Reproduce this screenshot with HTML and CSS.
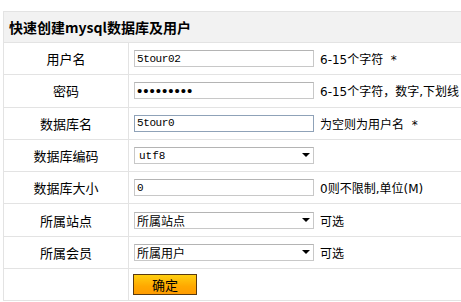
FILE: index.html
```html
<!DOCTYPE html>
<html lang="zh-CN">
  <head>
    <meta charset="UTF-8" />
    <title>快速创建mysql数据库及用户</title>
    <link rel="stylesheet" href="styles.css">
  </head>
  <body>
    <div class="wrap">
      <table class="form-table">
        <tr class="head">
          <th colspan="2">快速创建mysql数据库及用户</th>
        </tr>
        <tr>
          <td class="label">用户名</td>
          <td><input class="txt" type="text" value="5tour02" /><span class="hint">6-15个字符&nbsp;&nbsp;*</span></td>
        </tr>
        <tr>
          <td class="label">密码</td>
          <td><input class="txt pwd" type="password" value="123456789" /><span class="hint">6-15个字符，数字,下划线</span></td>
        </tr>
        <tr>
          <td class="label">数据库名</td>
          <td><input class="txt focus" type="text" value="5tour0" /><span class="hint">为空则为用户名&nbsp;&nbsp;*</span></td>
        </tr>
        <tr>
          <td class="label">数据库编码</td>
          <td><span class="sel"><select><option>utf8</option></select></span></td>
        </tr>
        <tr>
          <td class="label">数据库大小</td>
          <td><input class="txt" type="text" value="0" /><span class="hint">0则不限制,单位(M)</span></td>
        </tr>
        <tr>
          <td class="label">所属站点</td>
          <td><span class="sel"><select class="cn"><option>所属站点</option></select></span><span class="hint">可选</span></td>
        </tr>
        <tr>
          <td class="label">所属会员</td>
          <td><span class="sel"><select class="cn"><option>所属用户</option></select></span><span class="hint">可选</span></td>
        </tr>
        <tr>
          <td class="label"></td>
          <td><input class="btn" type="button" value="确定" /></td>
        </tr>
      </table>
    </div>
  </body>
</html>
```
FILE: styles.css
```css
html, body {
  margin: 0;
  overflow: hidden;
  background: #fff;
}
body {
  font-family: "DejaVu Sans", "Noto Sans CJK SC", sans-serif;
  font-size: 12px;
  color: #000;
}
.wrap {
  padding: 11px 0 0 3px;
  width: 560px;
}
.form-table {
  border-collapse: collapse;
  width: 100%;
  border: 1px solid #e0e0e0;
}
.form-table td, .form-table th {
  border: 1px solid #e3e3e3;
  padding: 0 0 0 5px;
  height: 31.3px;
  vertical-align: middle;
}
.head th {
  background: #f2f2f2;
  text-align: left;
  font-family: "Noto Sans CJK SC", sans-serif;
  font-size: 14px;
  font-weight: bold;
  padding-left: 5px;
  height: 30px;
}
.form-table td.label {
  width: 124px;
  text-align: center;
  font-family: "Noto Sans CJK SC", sans-serif;
  font-size: 13px;
  padding: 0;
}
.txt {
  box-sizing: border-box;
  width: 180px;
  height: 17px;
  border: 1px solid #c8c8c8;
  border-top-color: #b4b4b4;
  padding: 0 2px;
  margin: 0;
  font-family: "Liberation Mono", monospace;
  font-size: 11px;
  letter-spacing: -0.4px;
  vertical-align: middle;
  outline: none;
}
.txt.focus {
  border-color: #8fa2b8;
}
.pwd {
  font-family: "Liberation Sans", sans-serif;
  font-size: 15px;
  letter-spacing: 1px;
}
.hint {
  margin-left: 6px;
  vertical-align: middle;
  font-family: "DejaVu Sans", "Noto Sans CJK SC", sans-serif;
  font-size: 12px;
  white-space: nowrap;
}
.sel {
  position: relative;
  display: inline-block;
  vertical-align: middle;
}
.sel select {
  appearance: none;
  -webkit-appearance: none;
  box-sizing: border-box;
  width: 180px;
  height: 17px;
  border: 1px solid #c8c8c8;
  border-top-color: #b4b4b4;
  background: #fff;
  padding: 0 4px;
  margin: 0;
  font-family: "Liberation Mono", monospace;
  font-size: 11px;
  display: block;
  outline: none;
}
.sel select.cn {
  font-family: "Noto Sans CJK SC", sans-serif;
  font-size: 12px;
  padding: 0 2px;
  line-height: 15px;
}
.sel::after {
  content: "";
  position: absolute;
  right: 4px;
  top: 6px;
  border-left: 4px solid transparent;
  border-right: 4px solid transparent;
  border-top: 4px solid #000;
}
.btn {
  box-sizing: border-box;
  width: 64px;
  height: 21px;
  margin: 0 0 0 -1px;
  border: 1px solid #5a3a10;
  background: linear-gradient(#ffcf10, #ffa800 60%, #ff9c00);
  font-family: "Noto Sans CJK SC", sans-serif;
  font-size: 13px;
  color: #000;
  padding: 0;
  vertical-align: middle;
  cursor: pointer;
}
```
